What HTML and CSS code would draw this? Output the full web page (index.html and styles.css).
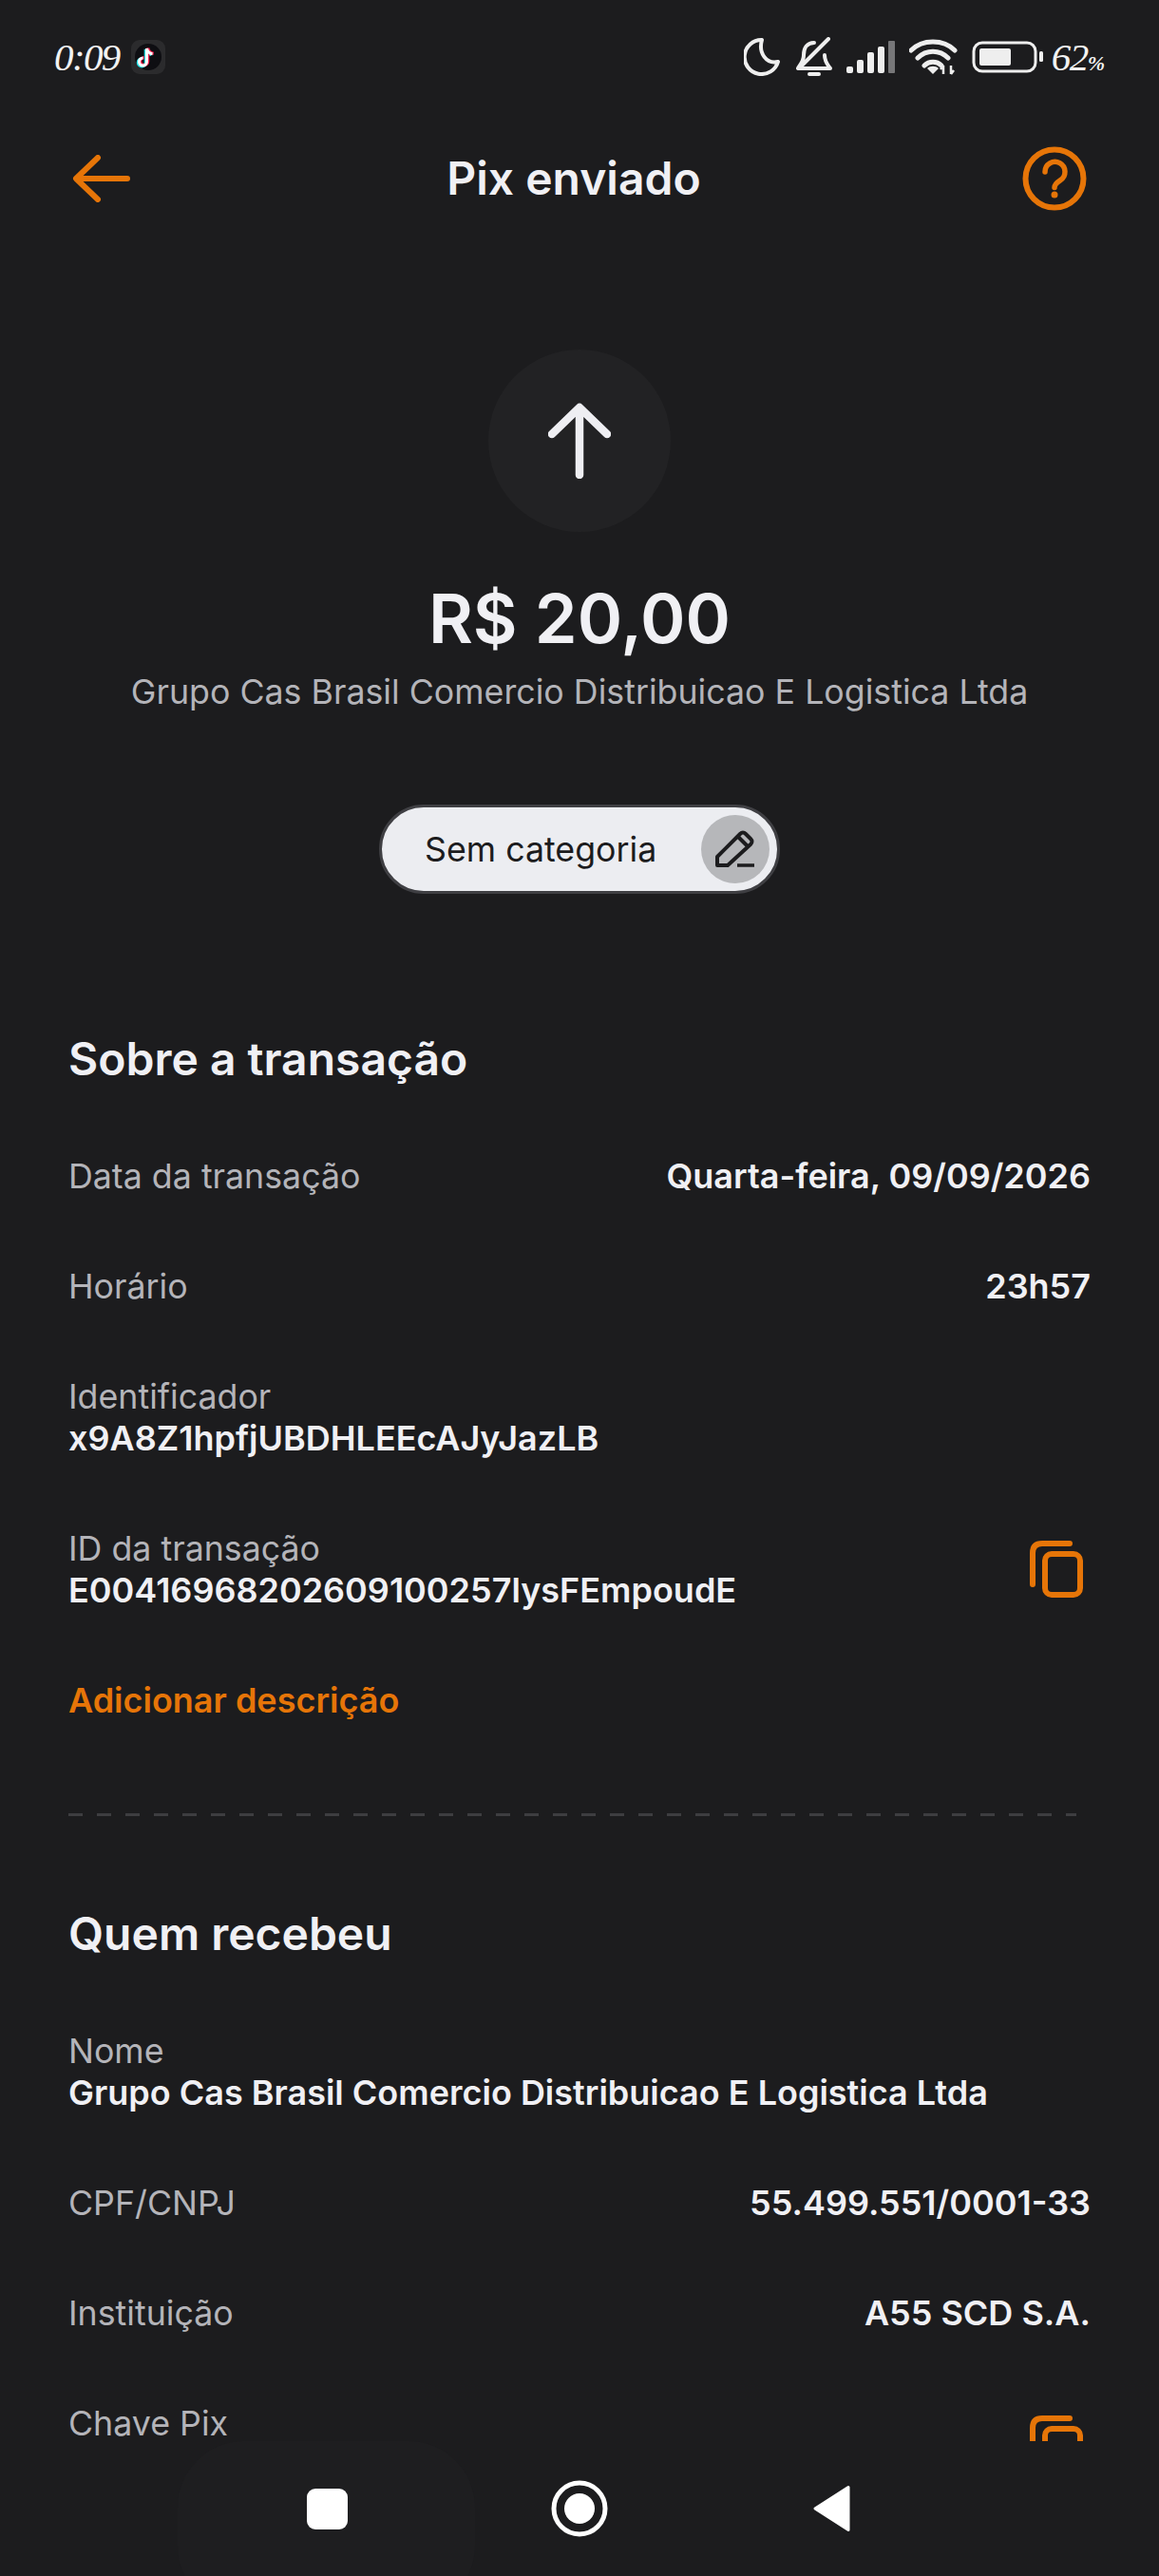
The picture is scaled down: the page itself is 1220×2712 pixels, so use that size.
FILE: index.html
```html
<!DOCTYPE html>
<html lang="pt-BR">
<head>
<meta charset="utf-8">
<title>Pix enviado</title>
<link rel="stylesheet" href="styles.css">
</head>
<body>
<div class="screen">
  <div class="status">
    <div class="status-left">
      <span class="clock">0:09</span>
      <svg class="tiktok" viewBox="0 0 36 36">
        <rect width="36" height="36" rx="9" fill="#2b2b2d"/>
        <circle cx="18" cy="18" r="14" fill="#0e0e12"/>
        <path d="M16.5 9v14a4 4 0 1 1-4-4M16.5 9c.6 3.400 2.800 5.300 6 5.700" fill="none" stroke="#25e0e6" stroke-width="3.200" transform="translate(-1.200 .8)"/>
        <path d="M16.500 9v14a4 4 0 1 1-4-4M16.500 9c.6 3.400 2.800 5.300 6 5.700" fill="none" stroke="#f5214f" stroke-width="3.200" transform="translate(1.200 -.4)"/>
        <path d="M16.500 9v14a4 4 0 1 1-4-4M16.500 9c.6 3.400 2.800 5.300 6 5.700" fill="none" stroke="#fff" stroke-width="3"/>
      </svg>
    </div>
    <div class="status-right">
      <svg class="si-moon" viewBox="0 0 41 40"><path d="M19 2A18 18 0 1 0 36 25C24 28 15 16 19 2Z" fill="none" stroke="#eeeeee" stroke-width="4" stroke-linejoin="round"/></svg>
      <svg class="si-bell" viewBox="0 0 38 42"><path d="M19 6C11 6 8 12 8 19C8 26 4 29 2 33H36C33 29 30 26 30 19M14 39H24M34 2L5 31" fill="none" stroke="#eeeeee" stroke-width="4" stroke-linecap="round" stroke-linejoin="round"/></svg>
      <svg class="si-signal" viewBox="0 0 53 34">
        <rect x="1" y="27" width="7" height="7" rx="2" fill="#eeeeee"/>
        <rect x="12" y="20" width="7" height="14" rx="2" fill="#eeeeee"/>
        <rect x="23" y="12" width="7" height="22" rx="2" fill="#eeeeee"/>
        <rect x="34" y="6" width="7" height="28" rx="2" fill="#eeeeee"/>
        <rect x="45" y="0" width="7" height="34" rx="1" fill="#777779"/>
      </svg>
      <svg class="si-wifi" viewBox="0 0 52 38">
        <path d="M2 12C14 0 36 0 48 12M9 20C18 11 32 11 41 20M16 28C21 23 29 23 34 28" fill="none" stroke="#eeeeee" stroke-width="5" stroke-linecap="round"/>
        <path d="M25 37L19 31C22 28 28 28 31 31Z" fill="#eeeeee"/>
        <path d="M36 28V37M33 32L36 28M44 28V37M47 33L44 37" fill="none" stroke="#eeeeee" stroke-width="2.500"/>
      </svg>
      <svg class="si-battery" viewBox="0 0 75 34">
        <rect x="2" y="2" width="65" height="30" rx="9" fill="none" stroke="#eeeeee" stroke-width="3"/>
        <rect x="8" y="8" width="33" height="18" rx="2" fill="#eeeeee"/>
        <rect x="71" y="11" width="4" height="11" rx="1.500" fill="#eeeeee"/>
      </svg>
      <span class="battery-text">62<small class="pct">%</small></span>
    </div>
  </div>

  <header class="topbar">
    <svg class="back" viewBox="0 0 62 50"><path d="M58 25H5M27 3L4 25L27 47" fill="none" stroke="#e67508" stroke-width="6" stroke-linecap="round" stroke-linejoin="round"/></svg>
    <h1 class="page-title">Pix enviado</h1>
    <svg class="help" viewBox="0 0 68 68"><circle cx="34" cy="34" r="30.500" fill="none" stroke="#e67508" stroke-width="6"/><path d="M24 27a10.500 10.500 0 1 1 16 8.800c-3.500 2.200-6 4-6 7.700" fill="none" stroke="#e67508" stroke-width="5.500" stroke-linecap="round"/><circle cx="34" cy="51" r="3.500" fill="#e67508"/></svg>
  </header>

  <main class="content">
    <section class="hero">
      <div class="hero-circle">
        <svg class="up" viewBox="0 0 66 80"><path d="M33 76V5M4 33L33 5L62 33" fill="none" stroke="#eeeef2" stroke-width="8.500" stroke-linecap="round" stroke-linejoin="round"/></svg>
      </div>
      <div class="amount">R$ 20,00</div>
      <div class="payee">Grupo Cas Brasil Comercio Distribuicao E Logistica Ltda</div>
      <div class="pill">
        <span class="pill-text">Sem categoria</span>
        <span class="pill-edit">
          <svg class="pencil" viewBox="0 0 42 40"><path d="M2 37V28L26 4Q29 1 32 4L37 9Q40 12 37 15L13 37ZM24 7L34 17" fill="none" stroke="#1c1c1e" stroke-width="4" stroke-linejoin="round"/><path d="M23 37H41" fill="none" stroke="#1c1c1e" stroke-width="3.500"/></svg>
        </span>
      </div>
    </section>

    <section class="block block-first">
      <h2 class="block-title">Sobre a transação</h2>
      <div class="rows">
        <div class="row"><span class="label">Data da transação</span><span class="value">Quarta-feira, 09/09/2026</span></div>
        <div class="row"><span class="label">Horário</span><span class="value">23h57</span></div>
        <div class="stack"><span class="label">Identificador</span><span class="value">x9A8Z1hpfjUBDHLEEcAJyJazLB</span></div>
        <div class="row">
          <div class="stack"><span class="label">ID da transação</span><span class="value">E00416968202609100257lysFEmpoudE</span></div>
          <svg class="copy" viewBox="0 0 56 60"><use href="#copy-shape"/></svg>
        </div>
        <span class="link">Adicionar descrição</span>
      </div>
    </section>

    <div class="dashes"></div>

    <section class="block">
      <h2 class="block-title">Quem recebeu</h2>
      <div class="rows">
        <div class="stack"><span class="label">Nome</span><span class="value">Grupo Cas Brasil Comercio Distribuicao E Logistica Ltda</span></div>
        <div class="row"><span class="label">CPF/CNPJ</span><span class="value">55.499.551/0001-33</span></div>
        <div class="row"><span class="label">Instituição</span><span class="value">A55 SCD S.A.</span></div>
        <div class="row row-tall">
          <span class="label label-top">Chave Pix</span>
          <svg class="copy" viewBox="0 0 56 60"><use href="#copy-shape"/></svg>
        </div>
      </div>
    </section>
  </main>

  <nav class="navbar">
    <div class="nav-glow"></div>
    <span class="nav-cell"><span class="nav-square"></span></span>
    <span class="nav-cell"><svg class="nav-home" viewBox="0 0 60 60"><circle cx="30" cy="30" r="27" fill="none" stroke="#fff" stroke-width="5"/><circle cx="30" cy="30" r="16" fill="#fff"/></svg></span>
    <span class="nav-cell"><svg class="nav-back" viewBox="0 0 40 50"><path d="M37 2.500V47.500L2 25Z" fill="#fff" stroke="#fff" stroke-width="3" stroke-linejoin="round"/></svg></span>
  </nav>
</div>

<svg class="defs" width="0" height="0">
  <defs>
    <g id="copy-shape" fill="none" stroke="#e67508" stroke-width="6" stroke-linecap="round">
      <path d="M3 46V13Q3 3 13 3H42"/>
      <rect x="16" y="14" width="37" height="43" rx="7"/>
    </g>
  </defs>
</svg>
</body>
</html>
```

FILE: styles.css
```css
* { box-sizing: border-box; }
html, body { margin: 0; padding: 0; background: #1c1c1e; }
body { font-family: Inter, "Liberation Sans", sans-serif; color: #f0f0f4; }
.defs { position: absolute; }

.screen { width: 1220px; height: 2712px; display: flex; flex-direction: column; overflow: hidden; background: #1c1c1e; }

.status { height: 120px; flex: none; display: flex; justify-content: space-between; align-items: center; padding: 0 57px; }
.status-left { display: flex; align-items: center; gap: 12px; }
.clock, .battery-text { font-family: "Liberation Serif", serif; font-style: italic; font-size: 41px; letter-spacing: -1.600px; color: #f2f2f2; }
.tiktok { width: 36px; height: 36px; }
.status-right { display: flex; align-items: center; gap: 14px; }
.si-moon { width: 41px; height: 40px; }
.si-bell { width: 38px; height: 42px; }
.si-signal { width: 53px; height: 34px; }
.si-wifi { width: 52px; height: 38px; }
.si-battery { width: 75px; height: 34px; }
.battery-text { margin-left: -5px; }
.pct { font-size: 22px; font-weight: 700; letter-spacing: 0; }

.topbar { height: 136px; flex: none; display: flex; align-items: center; justify-content: space-between; padding: 0 76px; }
.back { width: 62px; height: 50px; }
.help { width: 68px; height: 68px; }
.page-title { margin: 0 6px 0 0; font-size: 48px; line-height: 56px; font-weight: 600; color: #f0f0f4; }

.content { flex: 1; min-height: 0; overflow: hidden; }

.hero { display: flex; flex-direction: column; align-items: center; padding-top: 112px; }
.hero-circle { width: 192px; height: 192px; border-radius: 50%; background: #222224; display: flex; align-items: center; justify-content: center; }
.up { width: 66px; height: 80px; }
.amount { margin-top: 47px; font-size: 72px; line-height: 88px; font-weight: 600; color: #f0f0f4; }
.payee { margin-top: 11px; font-size: 35.750px; line-height: 44px; color: #b4b4b9; }

.pill { margin-top: 97px; width: 422px; height: 94px; border-radius: 47px; background: #ecedf1; border: 3px solid #3f3f43; display: flex; align-items: center; justify-content: space-between; padding: 0 8px 0 45px; }
.pill-text { font-size: 35.750px; line-height: 44px; color: #1c1c1e; }
.pill-edit { width: 72px; height: 72px; border-radius: 50%; background: #b6b7ba; display: flex; align-items: center; justify-content: center; }
.pencil { width: 42px; height: 40px; }

.block { padding: 0 72px; }
.block-first { margin-top: 146px; }
.block-title { margin: 0; font-size: 48px; line-height: 56px; font-weight: 600; color: #f0f0f4; }
.rows { margin-top: 73px; display: flex; flex-direction: column; gap: 72px; }
.row { display: flex; justify-content: space-between; align-items: center; }
.row-tall { min-height: 88px; }
.stack { display: flex; flex-direction: column; }
.label { font-size: 35.750px; line-height: 44px; color: #b4b4b9; }
.label-top { align-self: flex-start; }
.value { font-size: 36px; line-height: 44px; font-weight: 600; color: #f0f0f4; }
.link { font-size: 36px; line-height: 44px; font-weight: 600; color: #e67508; }
.copy { width: 56px; height: 60px; flex: none; margin-right: 8px; }

.dashes { margin: 97px 87px 96px 72px; height: 3px; background: repeating-linear-gradient(90deg, #3d3d40 0 15px, transparent 15px 30px); }

.navbar { height: 142px; margin-top: -6px; flex: none; display: flex; justify-content: center; align-items: center; position: relative; background: #1c1c1e; }
.nav-glow { position: absolute; left: 187px; top: 0; width: 313px; height: 180px; border-radius: 70px; background: #1e1e20; }
.nav-cell { width: 266px; display: flex; justify-content: center; align-items: center; position: relative; }
.nav-square { display: block; width: 43px; height: 43px; border-radius: 9px; background: #fff; }
.nav-home { width: 60px; height: 60px; }
.nav-back { width: 40px; height: 50px; }
```
